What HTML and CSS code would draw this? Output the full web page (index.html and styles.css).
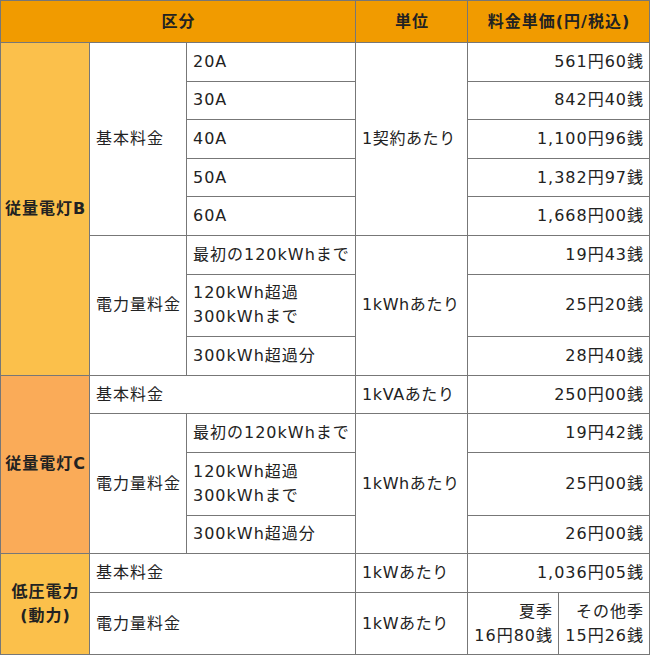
FILE: index.html
```html
<!DOCTYPE html>
<html lang="ja">
<head>
<meta charset="utf-8">
<link rel="stylesheet" href="styles.css">
</head>
<body>
<table class="rates">
  <colgroup>
    <col class="c1"><col class="c2"><col class="c3"><col class="c4"><col class="c5"><col class="c6">
  </colgroup>
  <thead>
    <tr>
      <th colspan="3">区分</th>
      <th>単位</th>
      <th colspan="2">料金単価(円/税込)</th>
    </tr>
  </thead>
  <tbody>
    <tr>
      <th class="zone zone-b" rowspan="8">従量電灯B</th>
      <td rowspan="5">基本料金</td>
      <td>20A</td>
      <td class="unit" rowspan="5">1契約あたり</td>
      <td class="num" colspan="2">561円60銭</td>
    </tr>
    <tr><td>30A</td><td class="num" colspan="2">842円40銭</td></tr>
    <tr><td>40A</td><td class="num" colspan="2">1,100円96銭</td></tr>
    <tr><td>50A</td><td class="num" colspan="2">1,382円97銭</td></tr>
    <tr><td>60A</td><td class="num" colspan="2">1,668円00銭</td></tr>
    <tr>
      <td rowspan="3">電力量料金</td>
      <td>最初の120kWhまで</td>
      <td class="unit" rowspan="3">1kWhあたり</td>
      <td class="num" colspan="2">19円43銭</td>
    </tr>
    <tr><td>120kWh超過<br>300kWhまで</td><td class="num" colspan="2">25円20銭</td></tr>
    <tr><td>300kWh超過分</td><td class="num" colspan="2">28円40銭</td></tr>
    <tr>
      <th class="zone zone-c" rowspan="4">従量電灯C</th>
      <td colspan="2">基本料金</td>
      <td class="unit">1kVAあたり</td>
      <td class="num" colspan="2">250円00銭</td>
    </tr>
    <tr>
      <td rowspan="3">電力量料金</td>
      <td>最初の120kWhまで</td>
      <td class="unit" rowspan="3">1kWhあたり</td>
      <td class="num" colspan="2">19円42銭</td>
    </tr>
    <tr><td>120kWh超過<br>300kWhまで</td><td class="num" colspan="2">25円00銭</td></tr>
    <tr><td>300kWh超過分</td><td class="num" colspan="2">26円00銭</td></tr>
    <tr>
      <th class="zone zone-b zone-tall" rowspan="2">低圧電力<br>(動力)</th>
      <td colspan="2">基本料金</td>
      <td class="unit">1kWあたり</td>
      <td class="num" colspan="2">1,036円05銭</td>
    </tr>
    <tr>
      <td colspan="2">電力量料金</td>
      <td class="unit">1kWあたり</td>
      <td class="num">夏季<br>16円80銭</td>
      <td class="num">その他季<br>15円26銭</td>
    </tr>
  </tbody>
</table>
</body>
</html>
```

FILE: styles.css
```css
html, body {
  margin: 0;
  padding: 0;
  background: #ffffff;
}

.rates {
  border-collapse: collapse;
  table-layout: fixed;
  width: 650px;
  font-family: "DejaVu Sans", "Noto Sans CJK JP", sans-serif;
  font-size: 16px;
  letter-spacing: 1px;
  color: #222222;
}

.c1 { width: 89px; }
.c2 { width: 97px; }
.c3 { width: 169px; }
.c4 { width: 112px; }
.c5 { width: 91px; }
.c6 { width: 91px; }

.rates th,
.rates td {
  border: 1px solid #777777;
  line-height: 24px;
  padding: 6.8px 5px 6.8px 6px;
  text-align: left;
  vertical-align: middle;
  font-weight: normal;
}

.rates thead th {
  background: #f19b00;
  font-weight: bold;
  text-align: center;
  padding-top: 8.5px;
  padding-bottom: 8.5px;
}

.rates .zone {
  font-weight: bold;
  text-align: center;
  padding-left: 2px;
  padding-right: 1px;
}

.zone-b { background: #fbc04b; }
.zone-c { background: #faab58; }
.zone-tall { line-height: 32px; }

.rates .unit {
  white-space: nowrap;
  letter-spacing: 0.6px;
}

.rates .num { text-align: right; }
```
